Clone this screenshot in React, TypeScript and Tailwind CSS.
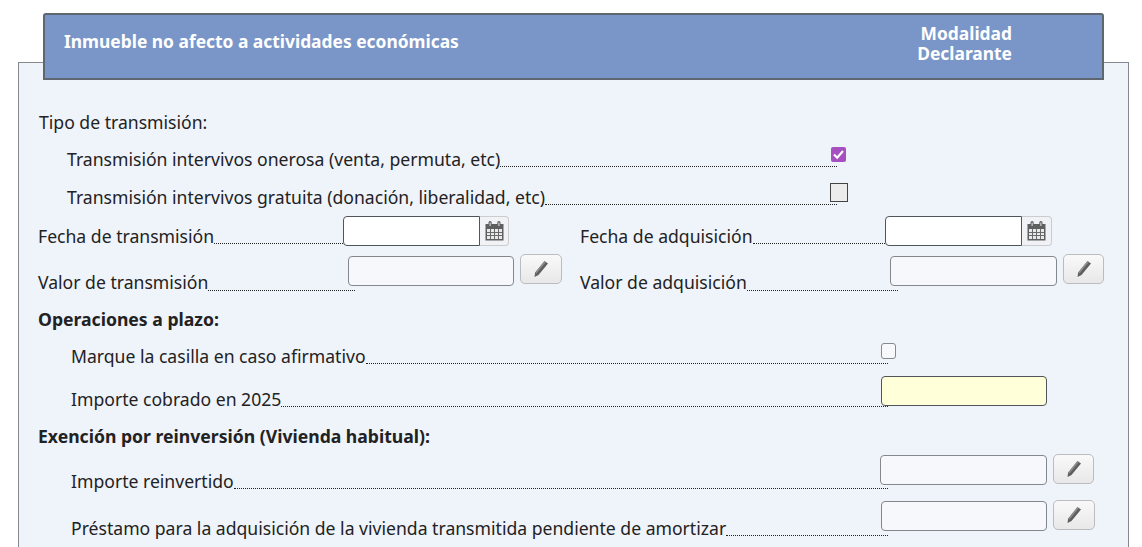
import React from 'react';

const Leader = ({ label, width, labelClass = '-mb-[4px]' }: { label: string; width: number; labelClass?: string }) => (
  <div className="flex items-end" style={{ width }}>
    <span className={`whitespace-nowrap leading-[24px] ${labelClass}`}>{label}</span>
    <span className="flex-1 border-b border-dotted border-[#222]" />
  </div>
);

const CalendarIcon = () => (
  <svg width="19" height="20" viewBox="0 0 19 20">
    <path fill="#5f5f5f" d="M0.5 3h3V1.6a1.6 1.6 0 0 1 3.2 0V3h5.6V1.6a1.6 1.6 0 0 1 3.2 0V3h3v16.5h-18z" />
    <path fill="#e6e8ec" d="M2 8h15v10H2z" />
    <path stroke="#6a6a6a" strokeWidth="1" d="M2 11.5h15M2 14.5h15M5.5 8v10M9.5 8v10M13.5 8v10" />
    <path fill="#e4e6ea" d="M4.6 1.5h1V5h-1zM13.4 1.5h1V5h-1z" />
  </svg>
);

const PencilIcon = () => (
  <svg width="16" height="18" viewBox="0 0 16 18">
    <path fill="#5e5e5e" d="M11.5 1l3.5 2.4L5.5 15 1.5 17l.7-4.4z" />
    <path fill="#8f8f8f" d="M11.5 1l1.3.9L3.4 13.6l-1.1-.9z" />
  </svg>
);

const EditButton = ({ className = '' }: { className?: string }) => (
  <button className={`flex h-[30px] w-[41px] items-center justify-center rounded-[5px] border border-[#bbbcbe] bg-gradient-to-b from-[#f9f9fa] to-[#e8e8e8] ${className}`}>
    <PencilIcon />
  </button>
);

const ReadOnlyInput = ({ className = '' }: { className?: string }) => (
  <div className={`h-[30px] rounded-[4px] border border-[#84888e] bg-[#f6f8fc] ${className}`} />
);

const DateInput = ({ className = '', pickerClass = 'w-[29px]' }: { className?: string; pickerClass?: string }) => (
  <div className={`flex ${className}`}>
    <div className="h-[30px] w-[137px] rounded-l-[4px] border border-[#50555c] bg-white" />
    <div className={`flex h-[30px] items-center justify-center rounded-r-[4px] border border-l-0 border-[#ccc] bg-[#f1f2f5] ${pickerClass}`}>
      <CalendarIcon />
    </div>
  </div>
);

export default function App() {
  return (
    <div className="h-[547px] w-[1142px] overflow-hidden bg-white pl-[18px] pt-[62px] font-['Noto_Sans',sans-serif] text-[17.6px] text-[#222]">
      <div className="h-[600px] w-[1111px] border-x border-t border-[#85888c] bg-[#eff3fa]">
        {/* Section header */}
        <div className="-mt-[50px] ml-[24px] flex h-[67px] w-[1061px] items-center justify-between rounded-t-[3px] border-2 border-[#5e6670] bg-[#7a96c8] pl-[19px] pr-[90px] text-[17.4px] font-bold text-white">
          <span className="mb-[10px]">Inmueble no afecto a actividades económicas</span>
          <span className="mb-[8px] text-right leading-[20px]">
            Modalidad
            <br />
            Declarante
          </span>
        </div>

        <div className="flex h-[54px] items-end pl-[20px]">
          <span className="leading-[24px]">Tipo de transmisión:</span>
        </div>

        <div className="flex h-[33px] items-end pl-[48px]">
          <Leader label="Transmisión intervivos onerosa (venta, permuta, etc)" width={770} />
          <div className="-ml-[6px] mb-[5px] flex h-[15px] w-[15px] items-center justify-center rounded-[2px] bg-[#a64fc0]">
            <svg width="13" height="13" viewBox="0 0 13 13">
              <path d="M2 6.5l3.2 3.2L11 3" fill="none" stroke="#fff" strokeWidth="2.2" />
            </svg>
          </div>
        </div>

        <div className="flex h-[38px] items-end pl-[48px]">
          <Leader label="Transmisión intervivos gratuita (donación, liberalidad, etc)" width={770} />
          <div className="-ml-[7px] mb-[3px] h-[19px] w-[18px] border border-[#444] bg-[#ececec]" />
        </div>

        <div className="flex h-[39px] items-end pl-[19px]">
          <Leader label="Fecha de transmisión" width={305} />
          <DateInput className="-mb-[2px]" />
          <div className="ml-[71px]">
            <Leader label="Fecha de adquisición" width={305} />
          </div>
          <DateInput className="-mb-[2px]" pickerClass="w-[30px]" />
        </div>

        <div className="flex h-[47px] items-end pl-[19px]">
          <Leader label="Valor de transmisión" width={317} labelClass="-mb-[3px]" />
          <ReadOnlyInput className="-ml-[7px] mb-[5px] w-[166px]" />
          <EditButton className="mb-[7px] ml-[6px] w-[42px]" />
          <div className="ml-[18px]">
            <Leader label="Valor de adquisición" width={318} labelClass="-mb-[3px]" />
          </div>
          <ReadOnlyInput className="-ml-[8px] mb-[5px] w-[167px]" />
          <EditButton className="mb-[7px] ml-[6px]" />
        </div>

        <div className="flex h-[40px] items-end pl-[19px] font-bold">
          <span className="leading-[24px]">Operaciones a plazo:</span>
        </div>

        <div className="flex h-[33px] items-end pl-[52px]">
          <Leader label="Marque la casilla en caso afirmativo" width={817} />
          <div className="-ml-[7px] mb-[5px] h-[16px] w-[15px] rounded-[3px] border border-[#85888c] bg-[#f6f8fc]" />
        </div>

        <div className="flex h-[43px] items-end pl-[52px]">
          <Leader label="Importe cobrado en 2025" width={817} />
          <div className="-ml-[7px] mb-[1px] h-[30px] w-[166px] rounded-[4px] border border-[#50555c] bg-[#ffffd9]" />
        </div>

        <div className="flex h-[41px] items-end pl-[19px] font-bold">
          <span className="leading-[24px]">Exención por reinversión (Vivienda habitual):</span>
        </div>

        <div className="flex h-[41px] items-end pl-[52px]">
          <Leader label="Importe reinvertido" width={817} />
          <ReadOnlyInput className="-ml-[8px] mb-[4px] w-[167px]" />
          <EditButton className="mb-[5px] ml-[6px]" />
        </div>

        <div className="flex h-[47px] items-end pl-[52px]">
          <Leader label="Préstamo para la adquisición de la vivienda transmitida pendiente de amortizar" width={817} />
          <ReadOnlyInput className="-ml-[7px] mb-[5px] w-[166px]" />
          <EditButton className="mb-[6px] ml-[6px] w-[42px]" />
        </div>
      </div>
    </div>
  );
}
